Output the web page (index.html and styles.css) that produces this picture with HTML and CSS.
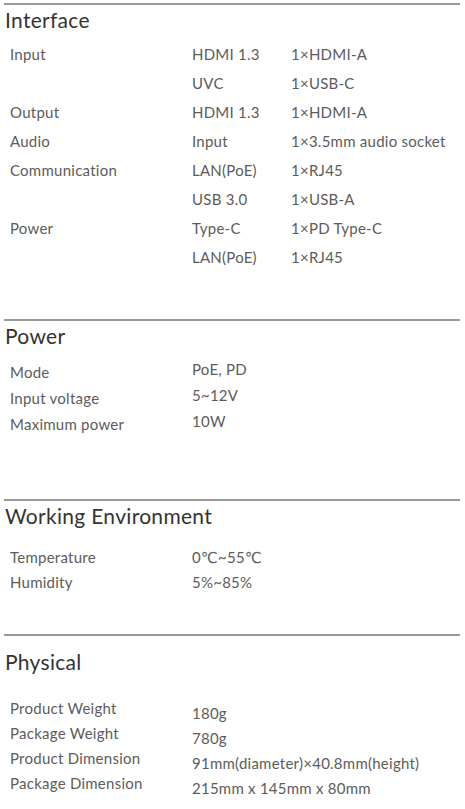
FILE: index.html
```html
<!DOCTYPE html>
<html lang="en">
<head>
<meta charset="utf-8">
<title>Specifications</title>
<link rel="stylesheet" href="styles.css">
</head>
<body>
<section class="section section--interface">
  <h2 class="section__title">Interface</h2>
  <div class="spec spec--three">
    <span class="spec__label">Input</span><span class="spec__sub">HDMI 1.3</span><span class="spec__val">1×HDMI-A</span>
    <span class="spec__label"></span><span class="spec__sub">UVC</span><span class="spec__val">1×USB-C</span>
    <span class="spec__label">Output</span><span class="spec__sub">HDMI 1.3</span><span class="spec__val">1×HDMI-A</span>
    <span class="spec__label">Audio</span><span class="spec__sub">Input</span><span class="spec__val">1×3.5mm audio socket</span>
    <span class="spec__label">Communication</span><span class="spec__sub">LAN(PoE)</span><span class="spec__val">1×RJ45</span>
    <span class="spec__label"></span><span class="spec__sub">USB 3.0</span><span class="spec__val">1×USB-A</span>
    <span class="spec__label">Power</span><span class="spec__sub">Type-C</span><span class="spec__val">1×PD Type-C</span>
    <span class="spec__label"></span><span class="spec__sub">LAN(PoE)</span><span class="spec__val">1×RJ45</span>
  </div>
</section>

<section class="section section--power">
  <h2 class="section__title">Power</h2>
  <div class="spec spec--two spec--power">
    <span class="spec__label">Mode</span><span class="spec__val">PoE, PD</span>
    <span class="spec__label">Input voltage</span><span class="spec__val">5~12V</span>
    <span class="spec__label">Maximum power</span><span class="spec__val">10W</span>
  </div>
</section>

<section class="section section--env">
  <h2 class="section__title">Working Environment</h2>
  <div class="spec spec--two spec--env">
    <span class="spec__label">Temperature</span><span class="spec__val">0℃~55℃</span>
    <span class="spec__label">Humidity</span><span class="spec__val">5%~85%</span>
  </div>
</section>

<section class="section section--physical">
  <h2 class="section__title">Physical</h2>
  <div class="spec spec--two spec--physical">
    <span class="spec__label">Product Weight</span><span class="spec__val">180g</span>
    <span class="spec__label">Package Weight</span><span class="spec__val">780g</span>
    <span class="spec__label">Product Dimension</span><span class="spec__val">91mm(diameter)×40.8mm(height)</span>
    <span class="spec__label">Package Dimension</span><span class="spec__val">215mm x 145mm x 80mm</span>
  </div>
</section>
</body>
</html>
```

FILE: styles.css
```css
html, body {
  margin: 0;
  padding: 0;
  background: #ffffff;
}

body {
  font-family: "Lato", "Open Sans", "DejaVu Sans", sans-serif;
  color: #5c5c5c;
}

.section {
  margin: 0 5px 0 4px;
  border-top: 2px solid #9a9a9a;
}

.section--interface { margin-top: 3px; }
.section--power { margin-top: 47px; }
.section--env { margin-top: 65px; }
.section--physical { margin-top: 39px; }

.section__title {
  margin: 1px 0 0 1px;
  font-size: 21px;
  line-height: 28px;
  font-weight: 400;
  letter-spacing: 0.3px;
  color: #333333;
}

.section--physical .section__title { margin-top: 12px; }

.spec {
  display: grid;
  padding-left: 6px;
  font-size: 15px;
  letter-spacing: 0.25px;
  color: #5c5c5c;
  white-space: nowrap;
}

.spec--three {
  grid-template-columns: 182px 99px 1fr;
  grid-auto-rows: 29px;
  line-height: 29px;
  margin-top: 6px;
}

.spec--two {
  grid-template-columns: 182px 1fr;
}

.spec--power {
  grid-auto-rows: 26px;
  line-height: 26px;
  margin-top: 6px;
}
.spec--power .spec__label { padding-top: 3px; }

.spec--env {
  grid-auto-rows: 25px;
  line-height: 25px;
  margin-top: 15px;
}

.spec--physical {
  grid-auto-rows: 25px;
  line-height: 25px;
  margin-top: 20px;
}
.spec--physical .spec__val { padding-top: 5px; }
```
